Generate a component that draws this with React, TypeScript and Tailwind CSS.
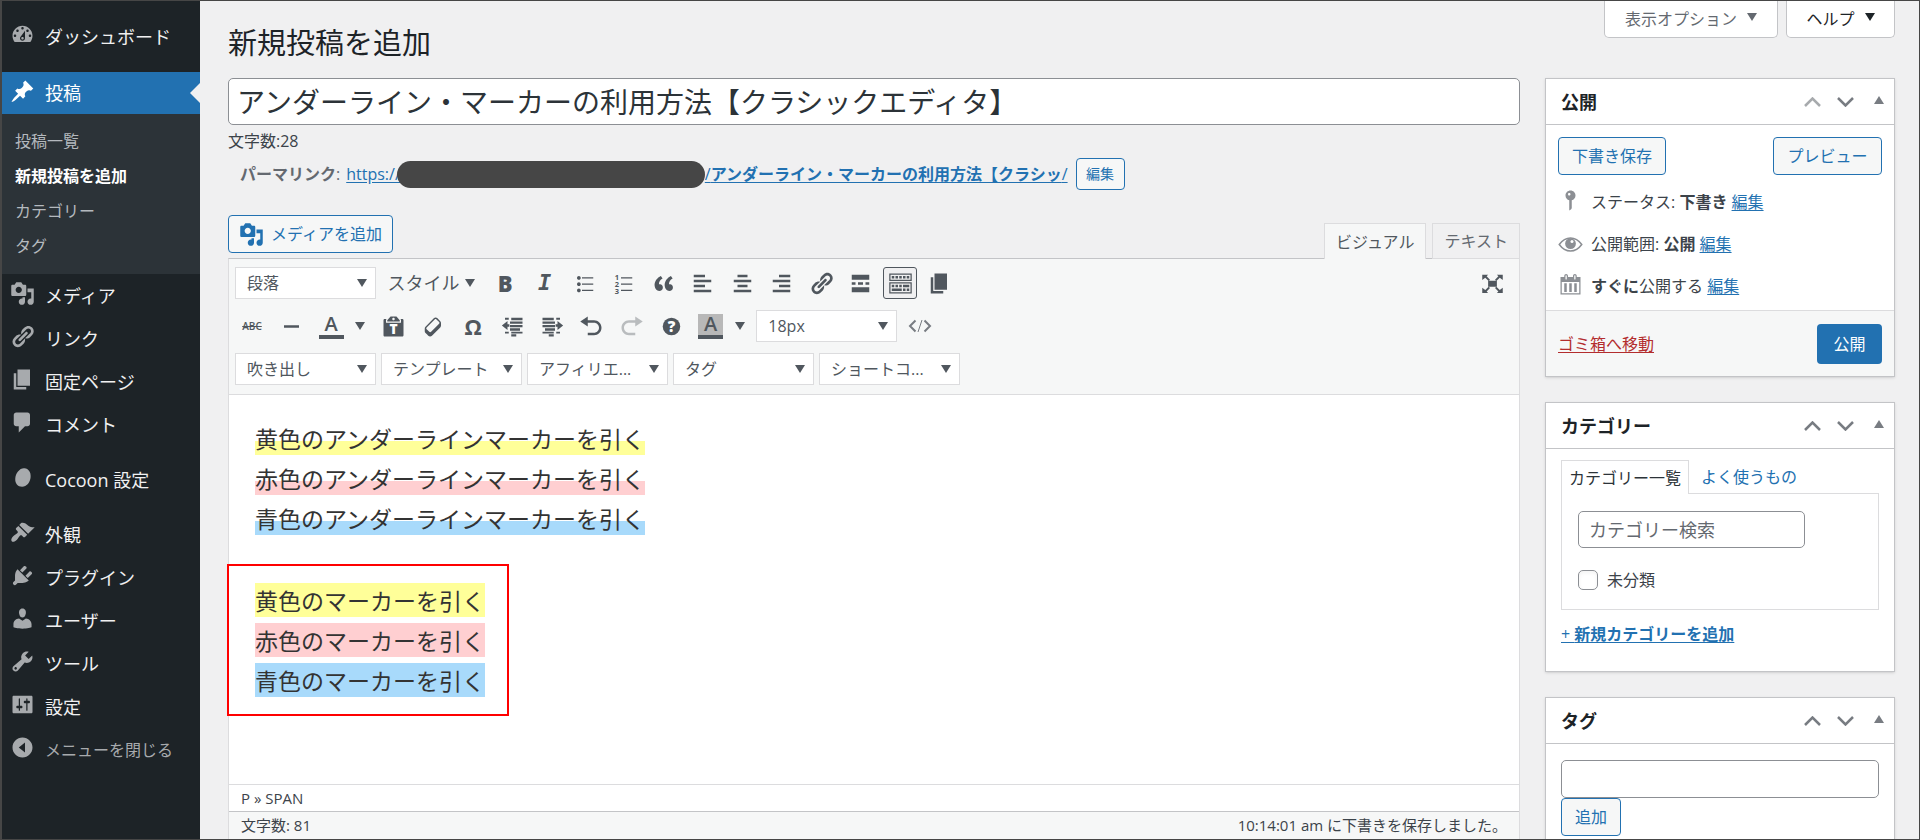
import { useState, type ReactNode } from "react";

const paths = {
  dashboard: "M3.76 16h12.48c1.1-1.37 1.76-3.11 1.76-5 0-4.42-3.58-8-8-8s-8 3.58-8 8c0 1.89.66 3.63 1.76 5zM10 4c.55 0 1 .45 1 1s-.45 1-1 1-1-.45-1-1 .45-1 1-1zM6 6c.55 0 1 .45 1 1s-.45 1-1 1-1-.45-1-1 .45-1 1-1zm8 0c.55 0 1 .45 1 1s-.45 1-1 1-1-.45-1-1 .45-1 1-1zm-5.37 5.55L12 7v6c0 1.1-.9 2-2 2s-2-.9-2-2c0-.57.24-1.08.63-1.45zM4 10c.55 0 1 .45 1 1s-.45 1-1 1-1-.45-1-1 .45-1 1-1zm12 0c.55 0 1 .45 1 1s-.45 1-1 1-1-.45-1-1 .45-1 1-1zm-5 3c0-.55-.45-1-1-1s-1 .45-1 1 .45 1 1 1 1-.45 1-1z",
  post: "M10.44 3.02l1.82-1.82 6.36 6.35-1.83 1.82c-1.05-.68-2.48-.57-3.41.36l-.75.75c-.92.93-1.04 2.35-.35 3.41l-1.83 1.82-2.41-2.41-2.8 2.79c-.42.42-3.38 2.71-3.8 2.29s1.86-3.39 2.28-3.81l2.79-2.79L4.1 9.36l1.83-1.82c1.05.69 2.48.57 3.4-.36l.75-.75c.93-.92 1.05-2.35.36-3.41z",
  media: "M13 11V4c0-.55-.45-1-1-1h-1.67L9 1H5L3.67 3H2c-.55 0-1 .45-1 1v7c0 .55.45 1 1 1h10c.55 0 1-.45 1-1zM7 4.5c1.38 0 2.5 1.12 2.5 2.5S8.38 9.5 7 9.5 4.5 8.38 4.5 7 5.62 4.5 7 4.5zM14 6h5v10.5c0 1.38-1.12 2.5-2.5 2.5S14 17.88 14 16.5s1.12-2.5 2.5-2.5c.17 0 .34.02.5.05V9h-3V6zm-4 8.05V13h2v3.5c0 1.38-1.12 2.5-2.5 2.5S7 17.88 7 16.5 8.12 14 9.5 14c.17 0 .34.02.5.05z",
  link: "M17.74 2.76c1.68 1.69 1.68 4.41 0 6.1l-1.53 1.52c-1.12 1.12-2.7 1.47-4.14 1.09l2.62-2.61.76-.77.76-.76c.84-.84.84-2.2 0-3.04-.84-.85-2.2-.85-3.04 0l-.77.76-3.38 3.38c-.37-1.44-.02-3.02 1.1-4.14l1.52-1.53c1.69-1.68 4.42-1.68 6.1 0zM8.59 13.43l5.34-5.34c.42-.42.42-1.1 0-1.52-.44-.43-1.13-.39-1.53 0l-5.33 5.34c-.42.42-.42 1.1 0 1.52.44.43 1.13.39 1.52 0zm-.76 2.29l4.14-4.15c.38 1.44.03 3.02-1.09 4.14l-1.52 1.53c-1.69 1.68-4.41 1.68-6.1 0-1.68-1.68-1.68-4.42 0-6.1l1.53-1.52c1.12-1.12 2.7-1.47 4.14-1.1l-4.14 4.15c-.85.84-.85 2.2 0 3.05.84.84 2.2.84 3.04 0z",
  page: "M6 15V2h10v13H6zm-1 1h8v2H3V5h2v11z",
  comment: "M5 2h9c1.1 0 2 .9 2 2v7c0 1.1-.9 2-2 2h-2l-5 5v-5H5c-1.1 0-2-.9-2-2V4c0-1.1.9-2 2-2z",
  cocoon: "M11.6 2.6c3.2.3 5.2 3.1 4.9 6.9-.3 4.3-3.2 7.8-6.8 7.8-3.5 0-5.7-2.7-5.5-6.4.2-4.5 3.7-8.7 7.4-8.3z",
  appearance: "M14.48 11.06L7.41 3.99l1.5-1.5c.5-.56 2.3-.47 3.51.32 1.21.8 1.43 1.28 2.91 2.1 1.18.64 2.45 1.26 4.45.85zm-.71.71L6.7 4.7 4.93 6.47c-.39.39-.39 1.02 0 1.41l1.06 1.06c.39.39.39 1.03 0 1.42-.6.6-1.43 1.11-2.21 1.69-.35.26-.7.53-1.01.84C1.43 14.23.4 16.08 1.4 17.07c.99 1 2.84-.03 4.18-1.36.31-.31.58-.66.85-1.02.57-.78 1.08-1.61 1.69-2.21.39-.39 1.02-.39 1.41 0l1.06 1.06c.39.39 1.02.39 1.41 0z",
  plugin: "M13.11 4.36L9.87 7.6 8 5.73l3.24-3.24c.35-.34 1.05-.2 1.56.32.52.51.66 1.21.31 1.55zm-8 1.77l.91-1.12 9.01 9.01-1.19.84c-.71.71-2.63 1.16-3.82 1.16H6.14L4.9 17.26c-.59.59-1.54.59-2.12 0-.59-.58-.59-1.53 0-2.12l1.24-1.24v-3.88c0-1.13.4-3.19 1.09-3.89zm7.26 3.97l3.24-3.24c.34-.35 1.04-.21 1.55.31.52.51.66 1.21.31 1.55l-3.24 3.25z",
  user: "M10 9.25c-2.27 0-2.73-3.44-2.73-3.44C7 4.02 7.82 2 9.97 2c2.16 0 2.98 2.02 2.71 3.81 0 0-.41 3.44-2.68 3.44zm0 2.57L12.72 10c2.39 0 4.52 2.33 4.52 4.53v2.49s-3.65 1.13-7.24 1.13c-3.65 0-7.24-1.13-7.24-1.13v-2.49c0-2.25 1.94-4.48 4.47-4.48z",
  tool: "M16.68 9.77c-1.34 1.34-3.3 1.67-4.95.99l-5.41 6.52c-.99.99-2.59.99-3.58 0s-.99-2.59 0-3.57l6.52-5.42c-.68-1.65-.35-3.61.99-4.95 1.28-1.28 3.12-1.62 4.72-1.06l-2.89 2.89 2.82 2.82 2.86-2.87c.53 1.58.18 3.39-1.08 4.65zM3.81 16.21c.4.39 1.04.39 1.43 0 .4-.4.4-1.04 0-1.43-.39-.4-1.03-.4-1.43 0-.39.39-.39 1.03 0 1.43z",
  settings: "M18 16V4c0-.55-.45-1-1-1H3c-.55 0-1 .45-1 1v12c0 .55.45 1 1 1h14c.55 0 1-.45 1-1zM8 11h1c.55 0 1 .45 1 1s-.45 1-1 1H8v1.5c0 .28-.22.5-.5.5s-.5-.22-.5-.5V13H6c-.55 0-1-.45-1-1s.45-1 1-1h1V5.5c0-.28.22-.5.5-.5s.5.22.5.5V11zm5-2h-1c-.55 0-1-.45-1-1s.45-1 1-1h1V5.5c0-.28.22-.5.5-.5s.5.22.5.5V7h1c.55 0 1 .45 1 1s-.45 1-1 1h-1v5.5c0 .28-.22.5-.5.5s-.5-.22-.5-.5V9z",
  collapse: "M10 2c4.42 0 8 3.58 8 8s-3.58 8-8 8-8-3.58-8-8 3.58-8 8-8zm2 12V6l-5 4z",
  ul: "M5.5 7C4.67 7 4 6.33 4 5.5 4 4.68 4.67 4 5.5 4 6.32 4 7 4.68 7 5.5 7 6.33 6.32 7 5.5 7zM8 5h9v1H8V5zm-2.5 7c-.83 0-1.5-.67-1.5-1.5C4 9.68 4.67 9 5.5 9c.82 0 1.5.68 1.5 1.5 0 .83-.68 1.5-1.5 1.5zM8 10h9v1H8v-1zm-2.5 7c-.83 0-1.5-.67-1.5-1.5 0-.82.67-1.5 1.5-1.5.82 0 1.5.68 1.5 1.5 0 .83-.68 1.5-1.5 1.5zM8 15h9v1H8v-1z",
  quote: "M9.49 13.22c0-.74-.2-1.38-.61-1.9-.62-.78-1.83-.88-2.53-.72-.29-1.65 1.11-3.75 2.92-4.65L7.88 4c-2.73 1.3-5.42 4.28-4.96 8.05C3.21 14.43 4.59 16 6.54 16c.85 0 1.56-.25 2.12-.75s.83-1.18.83-2.03zm8.05 0c0-.74-.2-1.38-.61-1.9-.63-.78-1.83-.88-2.53-.72-.29-1.65 1.11-3.75 2.92-4.65L15.93 4c-2.73 1.3-5.41 4.28-4.95 8.05.29 2.38 1.66 3.95 3.61 3.95.85 0 1.56-.25 2.12-.75s.83-1.18.83-2.03z",
  alignLeft: "M12 5V3H3v2h9zm5 4V7H3v2h14zm-5 4v-2H3v2h9zm5 4v-2H3v2h14z",
  alignCenter: "M14 5V3H6v2h8zm3 4V7H3v2h14zm-3 4v-2H6v2h8zm3 4v-2H3v2h14z",
  alignRight: "M17 5V3H8v2h9zm0 4V7H3v2h14zm0 4v-2H8v2h9zm0 4v-2H3v2h14z",
  more: "M17 7V3H3v4h14zM6 11V9H3v2h3zm6 0V9H8v2h4zm5 0V9h-3v2h3zm0 6v-4H3v4h14z",
  kitchenSink: "M19 2v6H1V2h18zm-1 5V3H2v4h16zM5 4v2H3V4h2zm3 0v2H6V4h2zm3 0v2H9V4h2zm3 0v2h-2V4h2zm3 0v2h-2V4h2zm2 5v9H1V9h18zm-1 8v-7H2v7h16zM5 11v2H3v-2h2zm3 0v2H6v-2h2zm3 0v2H9v-2h2zm6 0v2h-5v-2h5zm-6 3v2H3v-2h8zm3 0v2h-2v-2h2zm3 0v2h-2v-2h2z",
  hr: "M4 9h12v2H4z",
  eraser: "M14.29 4.59l1.1 1.11c.41.4.61.94.61 1.47v2.12c0 .53-.2 1.07-.61 1.47l-6.63 6.63c-.4.41-.94.61-1.47.61s-1.07-.2-1.47-.61l-1.11-1.1-1.1-1.11c-.41-.4-.61-.94-.61-1.47v-2.12c0-.54.2-1.07.61-1.48l6.63-6.62c.4-.41.94-.61 1.47-.61s1.06.2 1.47.61zm-6.21 9.7l6.42-6.42c.39-.39.39-1.03 0-1.43L12.36 4.3c-.19-.19-.45-.29-.72-.29s-.52.1-.71.29l-6.42 6.42c-.39.4-.39 1.04 0 1.43l2.14 2.14c.38.38 1.04.38 1.43 0z",
  outdent: "M4 3h3v1.500H4zM9 3h9v2H9zM8 6h10v1.800H8zM8 8.800h10v1.800H8zM8 11.400h8v2H8zM4 14.200h3v1.300H4zM9 14.200h9v1.300H9zM9 16.200h4V18H9zM1.500 9.200L6 5.600v2.600h1.500v2H6v2.600z",
  indent: "M2 3h9v2H2zM13 3h3v1.500h-3zM2 6h10v1.800H2zM2 8.800h10v1.800H2zM4 11.400h8v2H4zM2 14.200h9v1.300H2zM13 14.200h3v1.300h-3zM7 16.200h4V18H7zM18.500 9.200L14 5.600v2.600h-1.500v2H14v2.600z",
  undo: "M12 5H7V2L1 6l6 4V7h5c2.2 0 4 1.8 4 4s-1.8 4-4 4H7v2h5c3.3 0 6-2.7 6-6s-2.7-6-6-6z",
  redo: "M8 5h5V2l6 4-6 4V7H8c-2.2 0-4 1.8-4 4s1.8 4 4 4h5v2H8c-3.3 0-6-2.7-6-6s2.7-6 6-6z",
  fullscreen: "M6.500 7.800h7v4.800h-7zM1.800 3h4.700L5.300 4.200 8 6.900 6.900 8 4.200 5.300 1.800 7.200zM18.200 3v4.200l-2.400-1.900L13.100 8 12 6.900l2.700-2.700L13.500 3zM1.800 17.500v-4.200l2.400 1.900 2.700-2.700L8 13.600l-2.700 2.700 1.200 1.200zM18.200 17.500h-4.700l1.200-1.200L12 13.600l1.100-1.100 2.700 2.700 2.400-1.900z",
  status: "M14 6c0 1.86-1.28 3.41-3 3.86V16c0 1-2 2-2 2V9.86c-1.72-.45-3-2-3-3.86 0-2.21 1.79-4 4-4s4 1.79 4 4zM8 5c0 .55.45 1 1 1s1-.45 1-1-.45-1-1-1-1 .45-1 1z",
  calendar: "M15 4h3v14H2V4h3V3c0-.83.67-1.5 1.5-1.5S8 2.17 8 3v1h4V3c0-.83.67-1.5 1.5-1.5S15 2.17 15 3v1zM6 3v2.5c0 .28.22.5.5.5s.5-.22.5-.5V3c0-.28-.22-.5-.5-.5S6 2.72 6 3zm7 0v2.5c0 .28.22.5.5.5s.5-.22.5-.5V3c0-.28-.22-.5-.5-.5s-.5.22-.5.5zm4 14V8H3v9h14zM7 16V9H5v7h2zm4 0V9H9v7h2zm4 0V9h-2v7h2z",
};

type IconName = keyof typeof paths;

function Icon({ name, className = "" }: { name: IconName; className?: string }) {
  return (
    <svg viewBox="0 0 20 20" className={`size-[25px] shrink-0 fill-current ${className}`} aria-hidden="true">
      <path fillRule="evenodd" d={paths[name]} />
    </svg>
  );
}

function Caret({ className = "fill-[#50575e]" }: { className?: string }) {
  return (
    <svg viewBox="0 0 10 8" className={`h-2 w-2.5 shrink-0 ${className}`} aria-hidden="true">
      <path d="M0 0h10L5 8z" />
    </svg>
  );
}

function MenuItem({ icon, label, muted }: { icon: IconName; label: string; muted?: boolean }) {
  return (
    <a href="#" className="flex h-[43px] items-center">
      <span className="flex w-[43px] shrink-0 justify-center pb-1 pr-0.5 text-[#a7aaad]">
        <Icon name={icon} />
      </span>
      <span className={muted ? "text-base text-[#a7aaad]" : "text-lg text-[#f0f0f1]"}>{label}</span>
    </a>
  );
}

function ToolButton({ label, active, children }: { label: string; active?: boolean; children: ReactNode }) {
  return (
    <button
      aria-label={label}
      className={`flex h-8 w-[34px] shrink-0 items-center justify-center rounded-[3px] text-[#50575e] ${active ? "border border-[#50575e] bg-[#f0f0f1]" : ""}`}
    >
      {children}
    </button>
  );
}

function ColorButton({ label, filled }: { label: string; filled?: boolean }) {
  return (
    <div className="flex h-8 w-[57px] shrink-0 items-center justify-between">
      <button aria-label={label} className="flex w-[34px] justify-center">
        <span className={`flex h-[25px] w-[25px] flex-col items-center justify-between border-b-4 border-[#50575e] font-[Open_Sans] text-xl/5 font-semibold text-[#50575e] ${filled ? "bg-[#b8b8b8]" : ""}`}>
          A
        </span>
      </button>
      <button aria-label={`${label}の選択`} className="flex w-[22px] justify-center">
        <Caret />
      </button>
    </div>
  );
}

function ListBox({ label, value }: { label: string; value: string }) {
  return (
    <div className="relative w-[141px] shrink-0">
      <select aria-label={label} className="h-8 w-full appearance-none border border-[#dcdcde] bg-white pl-[11px] text-base text-[#50575e]">
        <option>{value}</option>
      </select>
      <Caret className="pointer-events-none absolute right-[9px] top-3 fill-[#50575e]" />
    </div>
  );
}

function Panel({ title, first, children }: { title: string; first?: boolean; children: ReactNode }) {
  return (
    <section className="border border-[#c3c4c7] bg-white shadow-sm">
      <div className="flex h-[46px] items-center justify-between border-b border-[#c3c4c7] pl-[15px] pr-[10px]">
        <h2 className="text-lg font-bold text-[#1d2327]">{title}</h2>
        <div className="flex items-center gap-4 text-[#787c82]">
          <button aria-label="上に移動" className={first ? "text-[#a7aaad]" : ""}>
            <svg viewBox="0 0 17 10" className="h-2.5 w-[17px] fill-none stroke-current stroke-[2.5]"><path d="M1 9l7.500-7.500L16 9" /></svg>
          </button>
          <button aria-label="下に移動">
            <svg viewBox="0 0 17 10" className="h-2.5 w-[17px] fill-none stroke-current stroke-[2.5]"><path d="M1 1l7.500 7.500L16 1" /></svg>
          </button>
          <button aria-label="パネルを切り替え" className="pb-1 pl-1">
            <svg viewBox="0 0 10 8" className="h-2 w-2.5 fill-current"><path d="M0 8h10L5 0z" /></svg>
          </button>
        </div>
      </div>
      {children}
    </section>
  );
}

const outlineButton = "h-[38px] shrink-0 rounded-[4px] border border-[#2271b1] bg-[#f6f7f7] text-base text-[#2271b1]";
const link = "text-[#2271b1] underline underline-offset-2";

const underlined = [
  { text: "黄色のアンダーラインマーカーを引く", style: "bg-linear-to-b from-transparent from-60% to-[#ffff99] to-60%" },
  { text: "赤色のアンダーラインマーカーを引く", style: "bg-linear-to-b from-transparent from-60% to-[#ffcfd1] to-60%" },
  { text: "青色のアンダーラインマーカーを引く", style: "bg-linear-to-b from-transparent from-60% to-[#a8dafb] to-60%" },
];

const marked = [
  { text: "黄色のマーカーを引く", style: "bg-[#ffff99]" },
  { text: "赤色のマーカーを引く", style: "bg-[#ffcfd1]" },
  { text: "青色のマーカーを引く", style: "bg-[#a8dafb]" },
];

function AdminMenu() {
  return (
    <nav className="flex w-[198px] shrink-0 flex-col bg-[#1d2327] pt-[14px]">
      <MenuItem icon="dashboard" label="ダッシュボード" />
      <a href="#" className="relative mt-[14px] flex h-[42px] shrink-0 items-center bg-[#2271b1] text-white">
        <span className="flex w-[43px] justify-center pb-1 pr-0.5"><Icon name="post" /></span>
        <span className="text-lg">投稿</span>
        <svg viewBox="0 0 10 20" className="absolute right-0 top-[11px] h-5 w-2.5 fill-[#f0f0f1]"><path d="M10 0v20L0 10z" /></svg>
      </a>
      <div className="flex h-40 shrink-0 flex-col bg-[#2c3338] pl-[13px] pt-[10px] text-base/[35px] text-[#b4b9be]">
        <a href="#">投稿一覧</a>
        <a href="#" className="font-bold text-white">新規投稿を追加</a>
        <a href="#">カテゴリー</a>
        <a href="#">タグ</a>
      </div>
      <MenuItem icon="media" label="メディア" />
      <MenuItem icon="link" label="リンク" />
      <MenuItem icon="page" label="固定ページ" />
      <MenuItem icon="comment" label="コメント" />
      <div className="h-3 shrink-0" />
      <MenuItem icon="cocoon" label="Cocoon 設定" />
      <div className="h-3 shrink-0" />
      <MenuItem icon="appearance" label="外観" />
      <MenuItem icon="plugin" label="プラグイン" />
      <MenuItem icon="user" label="ユーザー" />
      <MenuItem icon="tool" label="ツール" />
      <MenuItem icon="settings" label="設定" />
      <MenuItem icon="collapse" label="メニューを閉じる" muted />
    </nav>
  );
}

function Toolbar() {
  return (
    <div className="flex flex-col gap-[11px] border-b border-[#dcdcde] bg-[#f6f7f7] pb-[9px] pl-1.5 pr-[10px] pt-2">
      <div className="flex justify-between">
        <div className="flex w-[722px] justify-between">
          <ListBox label="段落" value="段落" />
          <button className="flex h-8 w-[101px] items-center justify-between pl-1.5 pr-2 text-lg text-[#50575e]">
            スタイル <Caret />
          </button>
          <ToolButton label="太字"><span className="font-[Open_Sans] text-[22px]/8 font-extrabold">B</span></ToolButton>
          <ToolButton label="イタリック"><span className="font-[DejaVu_Sans_Mono] text-[22px]/8 font-bold italic">I</span></ToolButton>
          <ToolButton label="番号なしリスト"><Icon name="ul" /></ToolButton>
          <ToolButton label="番号付きリスト">
            <svg viewBox="0 0 20 20" className="size-[25px] fill-current" aria-hidden="true">
              <path d="M8 5h9v1H8zM8 10h9v1H8zM8 15h9v1H8z" />
              <g className="font-[Open_Sans] text-[6px] font-bold">
                <text x="3" y="7">1</text>
                <text x="3" y="12.5">2</text>
                <text x="3" y="18">3</text>
              </g>
            </svg>
          </ToolButton>
          <ToolButton label="引用"><Icon name="quote" /></ToolButton>
          <ToolButton label="左寄せ"><Icon name="alignLeft" /></ToolButton>
          <ToolButton label="中央揃え"><Icon name="alignCenter" /></ToolButton>
          <ToolButton label="右寄せ"><Icon name="alignRight" /></ToolButton>
          <ToolButton label="リンクの挿入"><Icon name="link" /></ToolButton>
          <ToolButton label="続きを読む"><Icon name="more" /></ToolButton>
          <ToolButton label="ツールバー切り替え" active><Icon name="kitchenSink" /></ToolButton>
          <ToolButton label="改ページ"><Icon name="page" /></ToolButton>
        </div>
        <ToolButton label="全画面"><Icon name="fullscreen" /></ToolButton>
      </div>
      <div className="flex w-[702px] justify-between">
        <ToolButton label="打ち消し"><span className="font-[Open_Sans] text-[10px] font-semibold line-through">ABC</span></ToolButton>
        <ToolButton label="横ライン"><Icon name="hr" /></ToolButton>
        <ColorButton label="テキスト色" />
        <ToolButton label="テキストとしてペースト">
          <svg viewBox="0 0 20 20" className="size-[25px] fill-current" aria-hidden="true">
            <path fillRule="evenodd" d="M12.38 2L15 5v1H5V5l2.64-3h4.74zM10 5c.55 0 1-.44 1-1 0-.55-.45-1-1-1s-1 .45-1 1c0 .56.45 1 1 1zm5.45-1H17c.55 0 1 .45 1 1v12c0 .56-.45 1-1 1H3c-.55 0-1-.44-1-1V5c0-.55.45-1 1-1h1.55L4 4.63V7h12V4.63z" />
            <text x="10" y="16" textAnchor="middle" className="fill-white font-[Open_Sans] text-[11px] font-extrabold">T</text>
          </svg>
        </ToolButton>
        <ToolButton label="書式設定をクリア"><Icon name="eraser" /></ToolButton>
        <ToolButton label="特殊文字"><span className="font-[Open_Sans] text-[22px]/8 font-bold">Ω</span></ToolButton>
        <ToolButton label="インデントを減らす"><Icon name="outdent" /></ToolButton>
        <ToolButton label="インデントを増やす"><Icon name="indent" /></ToolButton>
        <ToolButton label="取り消し"><Icon name="undo" /></ToolButton>
        <ToolButton label="やり直し"><Icon name="redo" className="text-[#b9bcbe]" /></ToolButton>
        <ToolButton label="キーボードショートカット">
          <svg viewBox="0 0 20 20" className="size-[25px] fill-current" aria-hidden="true">
            <circle cx="10" cy="10" r="7" />
            <text x="10" y="14.3" textAnchor="middle" className="fill-white font-[Open_Sans] text-[12px] font-extrabold">?</text>
          </svg>
        </ToolButton>
        <ColorButton label="背景色" filled />
        <ListBox label="フォントサイズ" value="18px" />
        <ToolButton label="コード">
          <svg viewBox="0 0 24 14" className="h-[14px] w-6 fill-none stroke-[#787c82] stroke-2" aria-hidden="true">
            <path d="M7.5 1.5L2 7l5.500 5.500M16.5 1.5L22 7l-5.500 5.500" />
            <path d="M14 1l-4 12" className="stroke-1" />
          </svg>
        </ToolButton>
      </div>
      <div className="flex gap-[5px]">
        <ListBox label="吹き出し" value="吹き出し" />
        <ListBox label="テンプレート" value="テンプレート" />
        <ListBox label="アフィリエイト" value="アフィリエ..." />
        <ListBox label="タグ" value="タグ" />
        <ListBox label="ショートコード" value="ショートコ..." />
      </div>
    </div>
  );
}

export default function App() {
  const [title, setTitle] = useState("アンダーライン・マーカーの利用方法【クラシックエディタ】");
  const [search, setSearch] = useState("");
  const [tag, setTag] = useState("");
  const [checked, setChecked] = useState(false);

  return (
    <div className="flex h-screen overflow-hidden border border-l-2 border-[#464646] bg-[#f0f0f1] font-['Open_Sans','Noto_Sans_CJK_JP',sans-serif] text-base text-[#3c434a]">
      <AdminMenu />

      <main className="flex min-w-0 flex-1 gap-[25px] pl-7 pr-6">
        <div className="flex min-w-0 flex-1 flex-col">
          <h1 className="flex h-[77px] shrink-0 items-center pt-1.5 text-[29px] text-[#1d2327]">新規投稿を追加</h1>
          <input
            aria-label="タイトル"
            value={title}
            onChange={e => setTitle(e.target.value)}
            className="h-[47px] w-full shrink-0 rounded-[5px] border border-[#8c8f94] bg-white px-2 pb-0.5 text-[28px] text-[#2c3338]"
          />
          <p className="h-[33px] shrink-0 leading-8">文字数:28</p>
          <div className="flex h-8 shrink-0 items-center whitespace-nowrap pl-3">
            <span className="text-[#646970]"><b>パーマリンク</b>:</span>
            <a href="#" className={`ml-1.5 flex items-center ${link}`}>
              <span>https://</span>
              <span className="-ml-1 h-[27px] w-[308px] rounded-full bg-[#464646]" />
              <span>/<b>アンダーライン・マーカーの利用方法【クラシッ</b>/</span>
            </a>
            <button className="ml-2 h-8 w-[49px] rounded-[4px] border border-[#2271b1] bg-[#f6f7f7] text-sm text-[#2271b1]">編集</button>
          </div>

          <div className="mt-[25px] flex h-[43px] shrink-0 justify-between">
            <button className={`flex items-center gap-[7px] px-2.5 ${outlineButton}`}>
              <Icon name="media" />
              メディアを追加
            </button>
            <div className="relative top-px flex h-9 gap-1.5 self-end">
              <button className="border border-b-0 border-[#dcdcde] bg-[#f6f7f7] px-[11px] text-[#50575e]">ビジュアル</button>
              <button className="border border-[#dcdcde] bg-[#f0f0f1] px-[11px] text-[#646970]">テキスト</button>
            </div>
          </div>

          <div className="flex min-h-0 flex-1 flex-col border border-b-0 border-[#dcdcde] border-t-[#c3c4c7] bg-white">
            <Toolbar />
            <div className="flex flex-1 flex-col items-start gap-[42px] pl-[26px] pt-[23px] font-['Noto_Sans_CJK_JP',sans-serif] text-[23px]/10 text-[#333]">
              <p>
                {underlined.map(line => (
                  <span key={line.text} className="block">
                    <span className={line.style}>{line.text}</span>
                  </span>
                ))}
              </p>
              <p className="relative">
                {marked.map(line => (
                  <span key={line.text} className="block">
                    <span className={line.style}>{line.text}</span>
                  </span>
                ))}
                <span className="absolute -bottom-4 -left-7 -right-6 -top-4 border-2 border-[#ff0000]" />
              </p>
            </div>
            <div className="flex h-[27px] shrink-0 items-center border-t border-[#dcdcde] pl-3 text-[15px]">P » SPAN</div>
            <div className="flex h-7 shrink-0 items-center justify-between border-t border-[#c3c4c7] bg-[#f6f7f7] pl-3 pr-3 text-[15px]">
              <span>文字数: 81</span>
              <span>10:14:01 am に下書きを保存しました。</span>
            </div>
          </div>
        </div>

        <aside className="flex w-[350px] shrink-0 flex-col gap-[25px]">
          <div className="-mt-px mb-[15px] flex h-[38px] shrink-0 justify-end gap-2">
            <button className="flex w-[174px] items-center justify-center gap-2.5 rounded-b-[5px] border border-t-0 border-[#c3c4c7] bg-white text-[#646970]">
              表示オプション
              <Caret className="mb-1 fill-[#646970]" />
            </button>
            <button className="flex w-[109px] items-center justify-center gap-2.5 rounded-b-[5px] border border-t-0 border-[#c3c4c7] bg-white text-[#1d2327]">
              ヘルプ
              <Caret className="mb-1 fill-[#1d2327]" />
            </button>
          </div>

          <Panel title="公開" first>
            <div className="flex justify-between px-3 pt-3">
              <button className={`w-[108px] ${outlineButton}`}>下書き保存</button>
              <button className={`w-[109px] ${outlineButton}`}>プレビュー</button>
            </div>
            <ul className="px-3 pb-[3px] pt-1.5 leading-[42px]">
              <li className="flex items-center gap-2">
                <Icon name="status" className="mb-1 text-[#8c8f94]" />
                <span>ステータス: <b>下書き</b> <a href="#" className={link}>編集</a></span>
              </li>
              <li className="flex items-center gap-2">
                <svg viewBox="0 0 20 20" className="size-[25px] shrink-0" aria-hidden="true">
                  <path d="M1 10C3.700 6.300 6.700 4.800 10 4.800s6.300 1.500 9 5.200c-2.700 3.700-5.700 5.200-9 5.200S3.700 13.700 1 10z" className="fill-none stroke-[#8c8f94] stroke-[1.2]" />
                  <circle cx="10" cy="9.3" r="4.3" className="fill-[#8c8f94]" />
                  <circle cx="11.2" cy="7.6" r="1.2" className="fill-white" />
                </svg>
                <span>公開範囲: <b>公開</b> <a href="#" className={link}>編集</a></span>
              </li>
              <li className="flex items-center gap-2">
                <Icon name="calendar" className="mb-1 text-[#8c8f94]" />
                <span><b>すぐに</b>公開する <a href="#" className={link}>編集</a></span>
              </li>
            </ul>
            <div className="flex h-[66px] items-center justify-between border-t border-[#dcdcde] bg-[#f6f7f7] px-3">
              <a href="#" className="text-[#b32d2e] underline underline-offset-2">ゴミ箱へ移動</a>
              <button className="h-10 w-[65px] rounded-[4px] bg-[#2271b1] text-white">公開</button>
            </div>
          </Panel>

          <Panel title="カテゴリー">
            <div className="px-[15px] pb-[25px] pt-[10px]">
              <div className="relative top-px flex h-[34px] items-center">
                <button className="h-full w-32 border border-b-0 border-[#dcdcde] bg-white text-[#2c3338]">カテゴリー一覧</button>
                <a href="#" className="ml-3 text-[#2271b1]">よく使うもの</a>
              </div>
              <div className="border border-[#dcdcde] px-4 pb-[17px] pt-[17px]">
                <input
                  aria-label="カテゴリー検索"
                  placeholder="カテゴリー検索"
                  value={search}
                  onChange={e => setSearch(e.target.value)}
                  className="h-[37px] w-[227px] rounded-[5px] border border-[#8c8f94] px-2.5 text-lg placeholder:text-[#646970]"
                />
                <label className="mt-5 flex h-6 items-center gap-[9px]">
                  <input
                    type="checkbox"
                    checked={checked}
                    onChange={e => setChecked(e.target.checked)}
                    className="size-5 appearance-none rounded-[5px] border border-[#8c8f94] bg-white shadow-inner checked:bg-[#2271b1]"
                  />
                  未分類
                </label>
              </div>
              <a href="#" className={`mt-3 inline-block ${link}`}>+ <b>新規カテゴリーを追加</b></a>
            </div>
          </Panel>

          <Panel title="タグ">
            <div className="px-[15px] pb-4 pt-4">
              <input
                aria-label="タグを追加"
                value={tag}
                onChange={e => setTag(e.target.value)}
                className="block h-[38px] w-full rounded-[5px] border border-[#8c8f94] px-2.5"
              />
              <button className={`w-[60px] ${outlineButton}`}>追加</button>
            </div>
          </Panel>
        </aside>
      </main>
    </div>
  );
}
